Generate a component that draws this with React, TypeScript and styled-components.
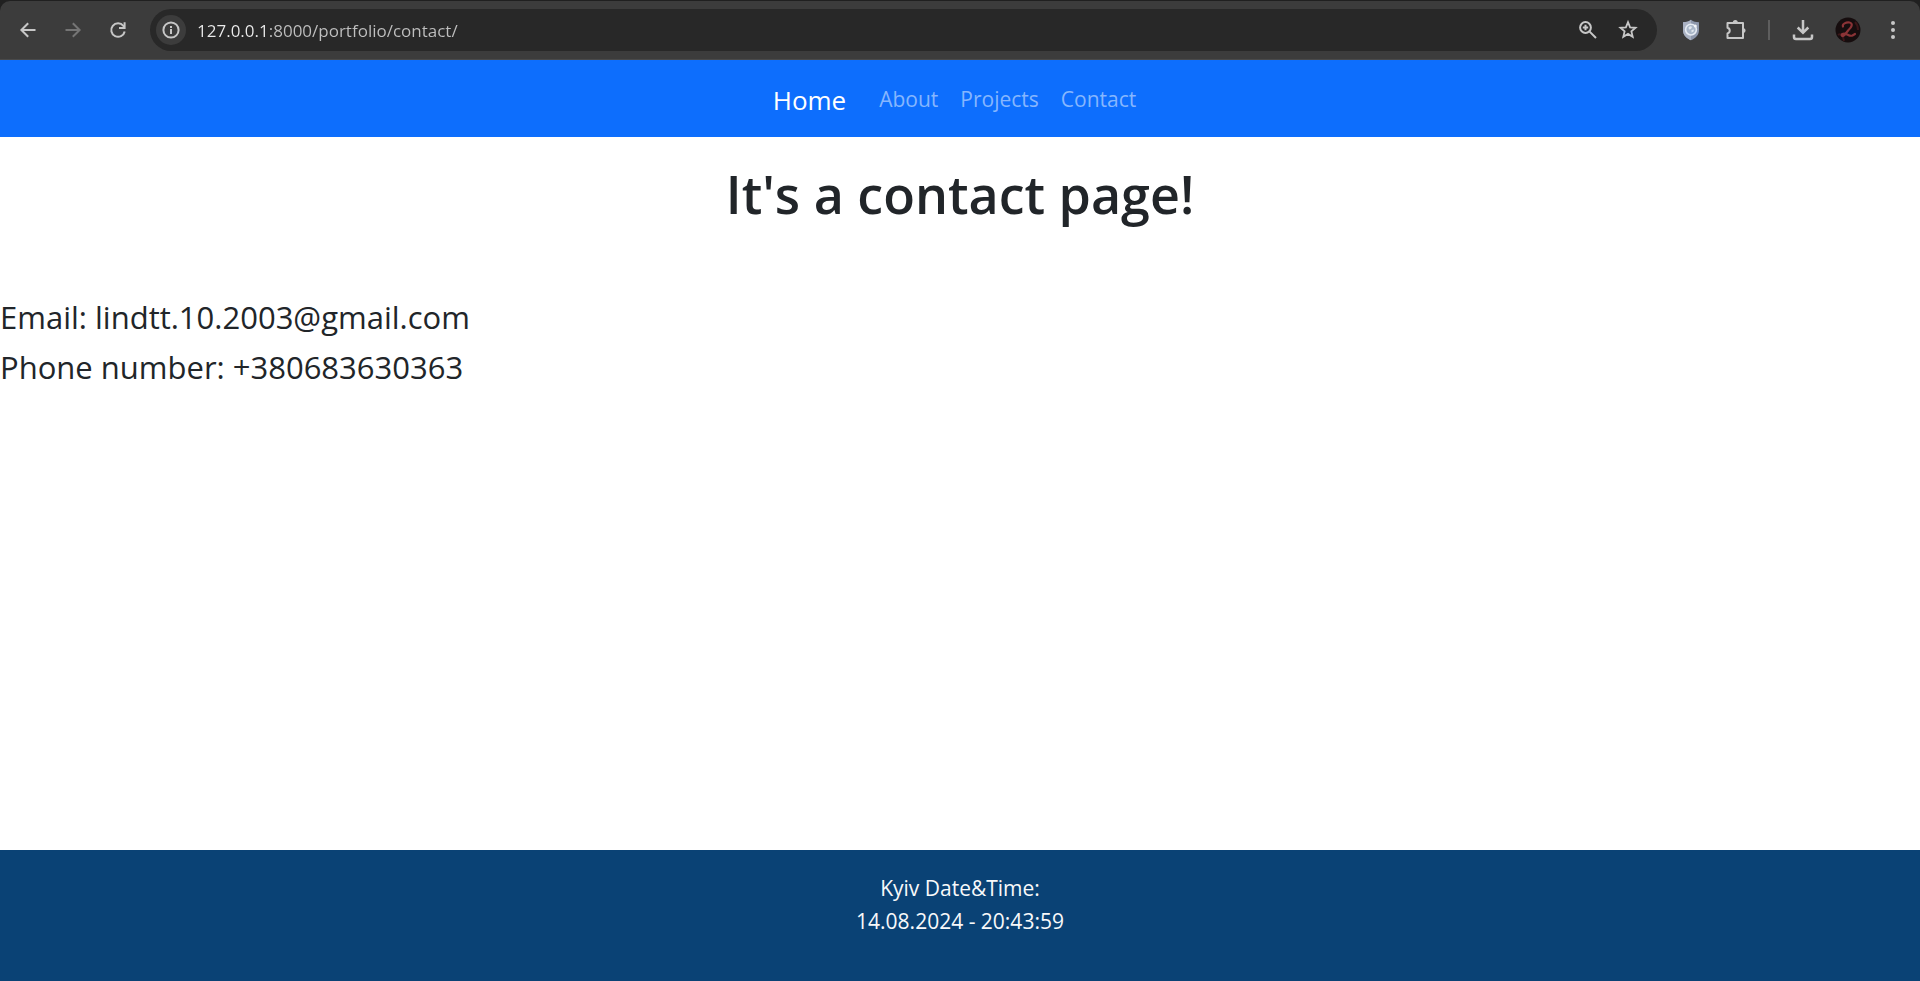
import React from 'react';
import styled, { createGlobalStyle } from 'styled-components';

const GlobalStyle = createGlobalStyle`
  *, *::before, *::after { box-sizing: border-box; }
  body {
    margin: 0;
    background: #fff;
    color: #212529;
    font-family: "Segoe UI", "Open Sans", sans-serif;
  }
`;

const Page = styled.div`
  display: flex;
  flex-direction: column;
  min-height: 100vh;
`;

const Chrome = styled.header`
  background: #202020;
  padding-top: 1px;
`;

const Toolbar = styled.div`
  display: flex;
  align-items: center;
  height: 59px;
  padding: 0 5px;
  background: #3c3c3c;
  border-bottom: 1px solid #4a4a4a;
  border-radius: 10px 10px 0 0;
`;

const IconButton = styled.button<{ $size?: number; $round?: boolean }>`
  display: grid;
  place-items: center;
  flex: none;
  width: ${({ $size = 45 }) => $size}px;
  height: ${({ $size = 45 }) => $size}px;
  padding: 0;
  border: 0;
  border-radius: 50%;
  background: ${({ $round }) => ($round ? '#3c3c3c' : 'transparent')};
  color: #c7c7c7;
  &:disabled { color: #757575; }
  svg { display: block; }
`;

const AddressBar = styled.form`
  display: flex;
  align-items: center;
  flex: 1;
  height: 42px;
  margin-left: 10px;
  margin-right: 11px;
  padding: 0 9px 0 6px;
  border-radius: 21px;
  background: #282828;
`;

/* The host part of the address is brighter than the path. */
const AddressInput = styled.input`
  flex: 1;
  min-width: 0;
  margin-left: 11px;
  padding: 2px 0 0;
  border: 0;
  outline: 0;
  background: linear-gradient(90deg, #ececec 7.4ch, #c0c0c0 7.4ch);
  background-clip: text;
  -webkit-background-clip: text;
  color: transparent;
  caret-color: #ececec;
  font-family: inherit;
  font-size: 17px;
  line-height: 24px;
`;

const Separator = styled.span`
  width: 2px;
  height: 20px;
  margin: 0 10px;
  background: #5e5e5e;
`;

const Navbar = styled.nav`
  display: flex;
  align-items: center;
  justify-content: center;
  height: 77px;
  padding-top: 2px;
  background: #0d6efd;
`;

const Brand = styled.a`
  margin-right: 22px;
  color: #fff;
  font-size: 26px;
  line-height: 40px;
  text-decoration: none;
`;

const NavLinks = styled.ul`
  display: flex;
  margin: 0;
  padding: 0;
  list-style: none;
`;

const NavLink = styled.a`
  display: block;
  padding: 0 11px;
  color: #86b6fe;
  font-size: 21px;
  line-height: 33px;
  text-decoration: none;
`;

const Main = styled.main`
  flex: 1;
`;

const Title = styled.h1`
  margin: 24px 0 0;
  font-size: 52px;
  font-weight: 600;
  line-height: 66px;
  text-align: center;
`;

const Details = styled.div`
  margin-top: 65px;
  font-size: 31px;
  line-height: 50px;
`;

const Line = styled.p`
  margin: 0;
`;

const Footer = styled.footer`
  padding: 22px 0 43px;
  background: #0a4275;
  color: #f8f9fa;
  font-size: 21px;
  line-height: 33px;
  text-align: center;
`;

const stroke = { fill: 'none', stroke: 'currentColor', strokeWidth: 2 } as const;

const BackIcon = () => (
  <svg width="20" height="20" viewBox="0 0 20 20" {...stroke}><path d="M17.5 10H4M10.2 3.2 3.4 10l6.8 6.8" /></svg>
);
const ForwardIcon = () => (
  <svg width="20" height="20" viewBox="0 0 20 20" {...stroke}><path d="M2.5 10H16M9.8 3.2l6.8 6.8-6.8 6.8" /></svg>
);
const ReloadIcon = () => (
  <svg width="20" height="20" viewBox="0 0 20 20" {...stroke}>
    <path d="M16.7 11.5A6.8 6.8 0 1 1 15.4 5.8L16.4 7.2" />
    <path d="M16.6 2.3v5.6H11" />
  </svg>
);
const InfoIcon = () => (
  <svg width="20" height="20" viewBox="0 0 20 20" {...stroke}>
    <circle cx="10" cy="10" r="7.6" /><path d="M10 9v5M10 6v2" />
  </svg>
);
const ZoomIcon = () => (
  <svg width="20" height="20" viewBox="0 0 20 20" {...stroke}>
    <circle cx="7.5" cy="7.5" r="5.4" /><path d="m11.4 11.4 6.6 6.6M7.5 4.8v5.4M4.8 7.5h5.4" />
  </svg>
);
const StarIcon = () => (
  <svg width="22" height="22" viewBox="0 0 22 22" {...stroke} strokeWidth="1.8">
    <path d="m11 3.2 2.1 5.1 5.5.5-4.2 3.6 1.3 5.4-4.7-2.9-4.7 2.9 1.3-5.4-4.2-3.6 5.5-.5z" />
  </svg>
);
const ShieldIcon = () => (
  <svg width="18" height="22" viewBox="0 0 18 22">
    <path d="M9 .8C6.6 2.6 4 3.2 1 3.2V11c0 5 3.4 8.4 8 10.3 4.6-1.9 8-5.3 8-10.3V3.2C14 3.2 11.4 2.6 9 .8z" fill="#8d97ac" />
    <path d="M9 .8C6.6 2.6 4 3.2 1 3.2V11c0 5 3.4 8.4 8 10.3z" fill="#aab2c3" />
    <circle cx="9" cy="10.6" r="5.4" fill="#a9b6c8" stroke="#e6ebf3" strokeWidth="1.6" />
    <path d="M6.5 8.5q2-2 3.5-.5l-1 2-2 .5zM9.5 11l2.5-.5-.5 2-2 1z" fill="#e1e7ee" />
    <circle cx="13.3" cy="7" r="1.5" fill="#f2f4f8" />
  </svg>
);
const PuzzleIcon = () => (
  <svg width="24" height="24" viewBox="0 0 24 24" {...stroke}>
    <path d="M3.5 5H19v15H3.5v-4.500a3 3 0 0 0 0-5.800z" strokeLinejoin="round" />
    <path d="M8.800 4.500a2.500 2.500 0 0 1 5 0zM19.300 10.300a2.300 2.300 0 0 1 0 4.600z" fill="currentColor" stroke="none" />
  </svg>
);
const DownloadIcon = () => (
  <svg width="24" height="24" viewBox="0 0 24 24" {...stroke} strokeWidth="2.5">
    <path d="M12 2v12.5M6.7 9.5l5.3 5.3 5.3-5.3M3 16.500V19q0 2 2 2h14q2 0 2-2v-2.500" />
  </svg>
);
const ProfileIcon = () => (
  <svg width="26" height="26" viewBox="0 0 26 26">
    <circle cx="13" cy="13" r="12.5" fill="#160d0e" />
    <path d="M3 18q3-2 5 2l1 4M20 5q3 3 3 8" fill="none" stroke="#3c1618" strokeWidth="2" />
    <path d="M8 9.5C7 7 11 5 14.5 5.5c4 1 2 5-1 7.500l-4 5c-2 2-4 .5-2-1 3.500-2 6.500 3 10 1.500l2.500-1.500" fill="none" stroke="#8a3336" strokeWidth="2.2" strokeLinecap="round" />
  </svg>
);
const MenuIcon = () => (
  <svg width="20" height="20" viewBox="0 0 20 20" fill="currentColor">
    <circle cx="10" cy="3" r="2" /><circle cx="10" cy="10" r="2" /><circle cx="10" cy="17" r="2" />
  </svg>
);

const navigation = ['About', 'Projects', 'Contact'];

export default function App() {
  return (
    <Page>
      <GlobalStyle />
      <Chrome>
        <Toolbar>
          <IconButton aria-label="Back"><BackIcon /></IconButton>
          <IconButton aria-label="Forward" disabled><ForwardIcon /></IconButton>
          <IconButton aria-label="Reload"><ReloadIcon /></IconButton>
          <AddressBar onSubmit={(e) => e.preventDefault()}>
            <IconButton type="button" $size={30} $round aria-label="View site information"><InfoIcon /></IconButton>
            <AddressInput aria-label="Address" defaultValue="127.0.0.1:8000/portfolio/contact/" />
            <IconButton type="button" $size={40} aria-label="Zoom"><ZoomIcon /></IconButton>
            <IconButton type="button" $size={40} aria-label="Bookmark this page"><StarIcon /></IconButton>
          </AddressBar>
          <IconButton aria-label="Privacy shield"><ShieldIcon /></IconButton>
          <IconButton aria-label="Extensions"><PuzzleIcon /></IconButton>
          <Separator />
          <IconButton aria-label="Downloads"><DownloadIcon /></IconButton>
          <IconButton aria-label="Profile"><ProfileIcon /></IconButton>
          <IconButton aria-label="Menu"><MenuIcon /></IconButton>
        </Toolbar>
      </Chrome>
      <Navbar>
        <Brand href="#home">Home</Brand>
        <NavLinks>
          {navigation.map((name) => (
            <li key={name}><NavLink href={`#${name.toLowerCase()}`}>{name}</NavLink></li>
          ))}
        </NavLinks>
      </Navbar>
      <Main>
        <Title>It's a contact page!</Title>
        <Details>
          <Line>Email: lindtt.10.2003@gmail.com</Line>
          <Line>Phone number: +380683630363</Line>
        </Details>
      </Main>
      <Footer>
        <Line>Kyiv Date&amp;Time:</Line>
        <Line>14.08.2024 - 20:43:59</Line>
      </Footer>
    </Page>
  );
}
